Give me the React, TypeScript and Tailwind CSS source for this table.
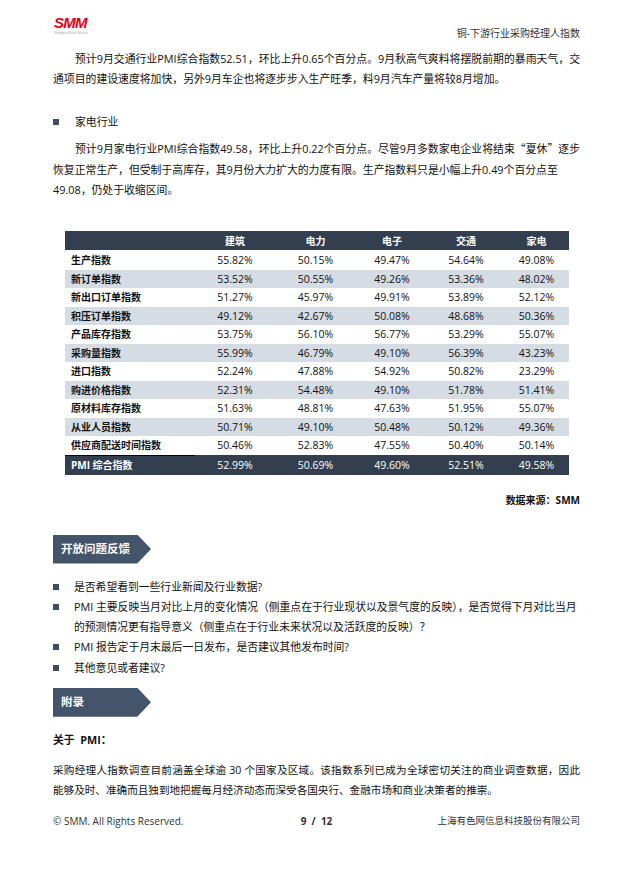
import React from "react";

const rows: string[][] = [
  ["生产指数", "55.82%", "50.15%", "49.47%", "54.64%", "49.08%"],
  ["新订单指数", "53.52%", "50.55%", "49.26%", "53.36%", "48.02%"],
  ["新出口订单指数", "51.27%", "45.97%", "49.91%", "53.89%", "52.12%"],
  ["积压订单指数", "49.12%", "42.67%", "50.08%", "48.68%", "50.36%"],
  ["产品库存指数", "53.75%", "56.10%", "56.77%", "53.29%", "55.07%"],
  ["采购量指数", "55.99%", "46.79%", "49.10%", "56.39%", "43.23%"],
  ["进口指数", "52.24%", "47.88%", "54.92%", "50.82%", "23.29%"],
  ["购进价格指数", "52.31%", "54.48%", "49.10%", "51.78%", "51.41%"],
  ["原材料库存指数", "51.63%", "48.81%", "47.63%", "51.95%", "55.07%"],
  ["从业人员指数", "50.71%", "49.10%", "50.48%", "50.12%", "49.36%"],
  ["供应商配送时间指数", "50.46%", "52.83%", "47.55%", "50.40%", "50.14%"],
];
const pmi = ["PMI 综合指数", "52.99%", "50.69%", "49.60%", "52.51%", "49.58%"];
const heads = ["", "建筑", "电力", "电子", "交通", "家电"];

const grid = "grid grid-cols-[130px_80px_81px_72px_76px_65px]";

function Banner({ text }: { text: string }) {
  return (
    <div className="ml-[53px] w-[98px] h-[29px] bg-[#44546a] [clip-path:polygon(0_0,86%_0,100%_50%,86%_100%,0_100%)] flex items-center pl-[8px]">
      <span className="text-white font-bold text-[11.5px] leading-[14px]">{text}</span>
    </div>
  );
}

function Bullet({ lines }: { lines: string[] }) {
  return (
    <div className="flex">
      <div className="w-[21px] shrink-0">
        <div className="w-[6px] h-[6px] bg-[#3f4b5e] mt-[7px]" />
      </div>
      <div>
        {lines.map((l, i) => (
          <div key={i} className="whitespace-nowrap">
            {l}
          </div>
        ))}
      </div>
    </div>
  );
}

export default function App() {
  return (
    <div className="w-[629px] h-[871px] bg-white text-[#111] font-['Open_Sans','Noto_Sans_CJK_SC',sans-serif] flex flex-col">
      {/* header */}
      <div className="mt-[15px] h-[25px] ml-[54px] mr-[49px] flex justify-between">
        <div className="flex flex-col items-start w-[36px]">
          <span className="font-['Liberation_Sans',sans-serif] font-black italic text-[15px] leading-[15px] text-[#e60012] tracking-[-0.8px]">
            SMM
          </span>
          <span className="text-[3px] leading-[4px] text-[#999] whitespace-nowrap mt-[1px]">
            Shanghai Metals Market
          </span>
        </div>
        <div className="self-end text-[10px] leading-[14px] text-[#333]">
          铜-下游行业采购经理人指数
        </div>
      </div>

      {/* para 1 */}
      <div className="mt-[9px] ml-[53px] mr-[49px] text-[10.85px] leading-[20px]">
        <div className="pl-[22px] whitespace-nowrap text-justify [text-align-last:justify]">
          预计9月交通行业PMI综合指数52.51，环比上升0.65个百分点。9月秋高气爽料将摆脱前期的暴雨天气，交
        </div>
        <div className="whitespace-nowrap">
          通项目的建设速度将加快，另外9月车企也将逐步步入生产旺季，料9月汽车产量将较8月增加。
        </div>
      </div>

      {/* title */}
      <div className="mt-[23px] ml-[53px] h-[20px] flex items-center text-[10.85px]">
        <div className="w-[6px] h-[6px] bg-[#3f4b5e] mr-[16px]" />
        <span>家电行业</span>
      </div>

      {/* para 2 */}
      <div className="mt-[6px] ml-[53px] mr-[49px] text-[10.85px] leading-[20.5px]">
        <div className="pl-[22px] whitespace-nowrap text-justify [text-align-last:justify]">
          预计9月家电行业PMI综合指数49.58，环比上升0.22个百分点。尽管9月多数家电企业将结束
          <span className="font-['Noto_Sans_CJK_SC',sans-serif]">“</span>夏休
          <span className="font-['Noto_Sans_CJK_SC',sans-serif]">”</span>逐步
        </div>
        <div className="whitespace-nowrap">
          恢复正常生产，但受制于高库存，其9月份大力扩大的力度有限。生产指数料只是小幅上升0.49个百分点至
        </div>
        <div className="whitespace-nowrap">49.08，仍处于收缩区间。</div>
      </div>

      {/* table */}
      <div className="mt-[30.5px] ml-[65px] w-[504px] text-[10.5px]">
        <div className={`${grid} h-[20px] bg-[#333f4f] text-white font-bold items-center border-b border-white`}>
          {heads.map((h, i) => (
            <div key={i} className="text-center leading-[14px] text-[10px]">
              {h}
            </div>
          ))}
        </div>
        {rows.map((r, ri) => (
          <div
            key={ri}
            className={`${grid} h-[18.5px] items-center ${ri % 2 === 1 ? "bg-[#d6dce4]" : "bg-white"}`}
          >
            {r.map((c, ci) =>
              ci === 0 ? (
                <div key={ci} className="pl-[6px] font-bold text-[10px] leading-[14px] whitespace-nowrap">
                  {c}
                </div>
              ) : (
                <div key={ci} className="text-center leading-[14px]">
                  {c}
                </div>
              )
            )}
          </div>
        ))}
        <div className={`${grid} h-[20px] bg-[#333f4f] text-white items-center`}>
          {pmi.map((c, ci) =>
            ci === 0 ? (
              <div key={ci} className="h-full flex items-center pl-[6px] font-bold text-[10px] whitespace-nowrap border-t border-black">
                {c}
              </div>
            ) : (
              <div key={ci} className="text-center leading-[14px]">
                {c}
              </div>
            )
          )}
        </div>
      </div>

      <div className="mt-[18px] mr-[49px] text-right text-[10px] font-bold leading-[14px]">
        数据来源：SMM
      </div>

      <div className="mt-[28px]">
        <Banner text="开放问题反馈" />
      </div>

      <div className="mt-[13px] ml-[53px] mr-[49px] text-[10.8px] leading-[20.25px]">
        <Bullet lines={["是否希望看到一些行业新闻及行业数据?"]} />
        <Bullet
          lines={[
            "PMI 主要反映当月对比上月的变化情况（侧重点在于行业现状以及景气度的反映），是否觉得下月对比当月",
            "的预测情况更有指导意义（侧重点在于行业未来状况以及活跃度的反映）？",
          ]}
        />
        <Bullet lines={["PMI 报告定于月末最后一日发布，是否建议其他发布时间?"]} />
        <Bullet lines={["其他意见或者建议?"]} />
      </div>

      <div className="mt-[10px]">
        <Banner text="附录" />
      </div>

      <div className="mt-[15px] ml-[53px] font-bold text-[10.8px] leading-[16px]">
        关于&nbsp;&nbsp;PMI：
      </div>

      <div className="mt-[12px] ml-[53px] mr-[49px] text-[10.6px] leading-[20px]">
        <div className="whitespace-nowrap text-justify [text-align-last:justify]">
          采购经理人指数调查目前涵盖全球逾 30 个国家及区域。该指数系列已成为全球密切关注的商业调查数据，因此
        </div>
        <div className="whitespace-nowrap">
          能够及时、准确而且独到地把握每月经济动态而深受各国央行、金融市场和商业决策者的推崇。
        </div>
      </div>

      <div className="mt-[14px] ml-[53px] mr-[49px] grid grid-cols-3 items-center leading-[14px] text-[#333]">
        <div className="text-[10px] whitespace-nowrap">© SMM. All Rights Reserved.</div>
        <div className="text-center text-[10px] font-bold">9 &nbsp;/ &nbsp;12</div>
        <div className="text-right text-[9.5px] whitespace-nowrap">上海有色网信息科技股份有限公司</div>
      </div>
    </div>
  );
}
